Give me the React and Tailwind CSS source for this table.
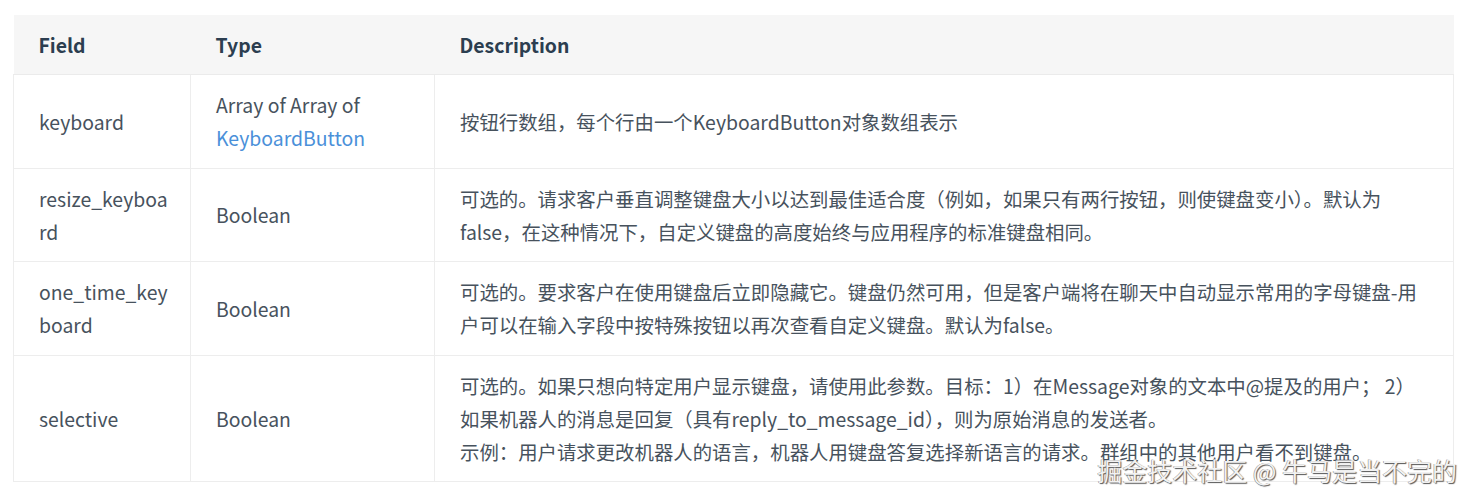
import React from "react";

const font = { fontFamily: '"Noto Sans CJK SC", "Noto Sans", sans-serif' };

const rows = [
  {
    field: ["keyboard"],
    type: (
      <>
        Array of Array of
        <br />
        <span className="text-[#4a90d9]">KeyboardButton</span>
      </>
    ),
    desc: <>按钮行数组，每个行由一个KeyboardButton对象数组表示</>,
  },
  {
    field: ["resize_keyboa", "rd"],
    type: "Boolean",
    desc: (
      <>
        可选的。请求客户垂直调整键盘大小以达到最佳适合度（例如，如果只有两行按钮，则使键盘变小）。默认为
        <br />
        false，在这种情况下，自定义键盘的高度始终与应用程序的标准键盘相同。
      </>
    ),
  },
  {
    field: ["one_time_key", "board"],
    type: "Boolean",
    desc: (
      <>
        可选的。要求客户在使用键盘后立即隐藏它。键盘仍然可用，但是客户端将在聊天中自动显示常用的字母键盘-用
        <br />
        户可以在输入字段中按特殊按钮以再次查看自定义键盘。默认为false。
      </>
    ),
  },
  {
    field: ["selective"],
    type: "Boolean",
    desc: (
      <>
        可选的。如果只想向特定用户显示键盘，请使用此参数。目标：1）在Message对象的文本中@提及的用户； 2）
        <br />
        如果机器人的消息是回复（具有reply_to_message_id），则为原始消息的发送者。
        <br />
        示例：用户请求更改机器人的语言，机器人用键盘答复选择新语言的请求。群组中的其他用户看不到键盘。
      </>
    ),
  },
];

export default function App() {
  return (
    <div className="relative w-[1474px] h-[501px] bg-white overflow-hidden" style={font}>
      <div className="pt-[15px] pl-[13px]">
        <table className="w-[1440px] border-collapse table-fixed text-[19.4px] leading-[33px] text-[#47525d]">
          <colgroup>
            <col className="w-[177px]" />
            <col className="w-[244px]" />
            <col className="w-[1019px]" />
          </colgroup>
          <thead>
            <tr className="bg-[#f6f6f6]">
              <th className="text-left font-bold text-[#2c3e50] px-[25px] py-[13px] border-b border-[#ebebeb]">Field</th>
              <th className="text-left font-bold text-[#2c3e50] px-[25px] py-[13px] border-b border-[#ebebeb]">Type</th>
              <th className="text-left font-bold text-[#2c3e50] px-[25px] py-[13px] border-b border-[#ebebeb]">Description</th>
            </tr>
          </thead>
          <tbody>
            {rows.map((r, i) => (
              <tr key={i}>
                <td className="px-[25px] py-[13.25px] align-middle border border-[#ededed] whitespace-nowrap">
                  {r.field.map((l, j) => (
                    <div key={j}>{l}</div>
                  ))}
                </td>
                <td className="px-[25px] py-[13.25px] align-middle border border-[#ededed]">{r.type}</td>
                <td className="px-[25px] py-[13.25px] align-middle border border-[#ededed]">{r.desc}</td>
              </tr>
            ))}
          </tbody>
        </table>
      </div>
      <div
        className="absolute right-[17px] top-[453px] text-[25px] leading-[34px] text-[#f2f2f2] whitespace-nowrap"
        style={{ ...font, textShadow: "1px 1px 1px #555, -0.5px -0.5px 0 #888" }}
      >
        掘金技术社区 @ 牛马是当不完的
      </div>
    </div>
  );
}
